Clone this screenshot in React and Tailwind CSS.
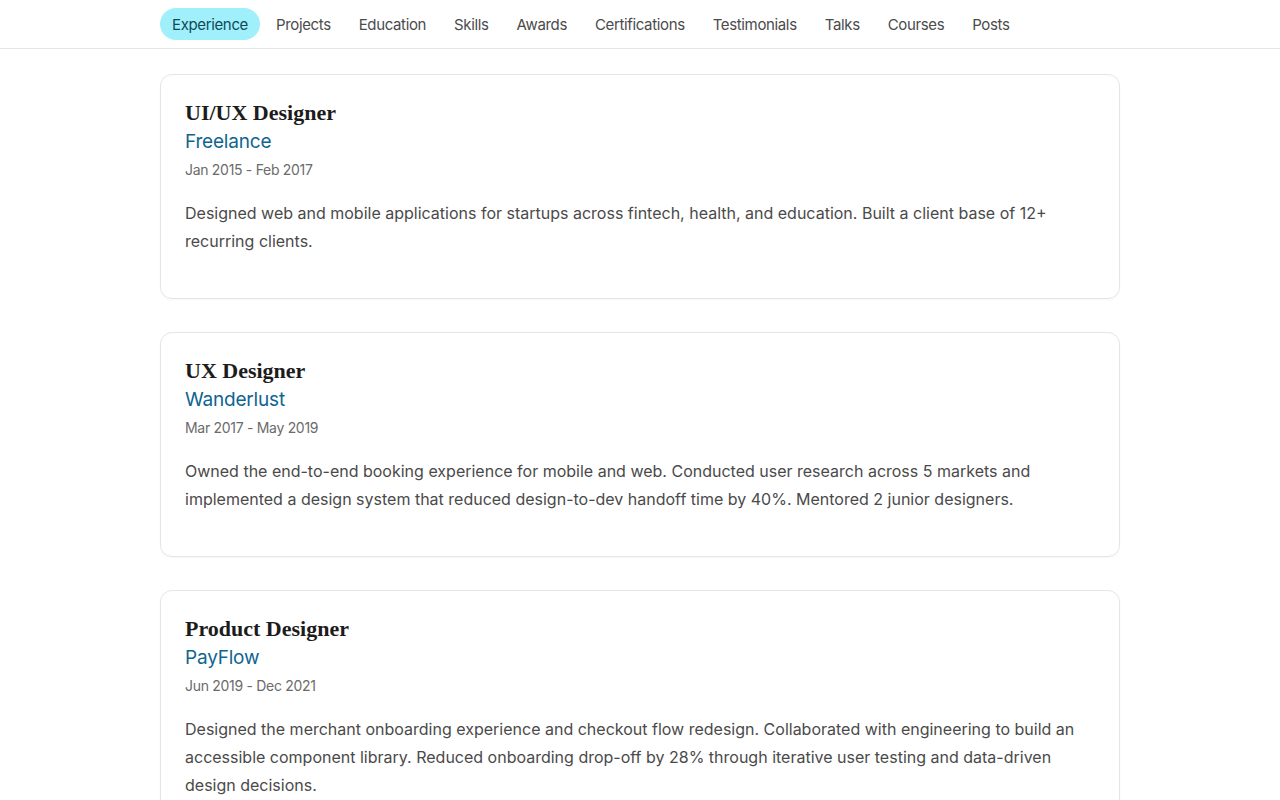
const tabs = ['Experience', 'Projects', 'Education', 'Skills', 'Awards', 'Certifications', 'Testimonials', 'Talks', 'Courses', 'Posts'];

const jobs = [
  {
    title: 'UI/UX Designer',
    company: 'Freelance',
    dates: 'Jan 2015 - Feb 2017',
    text: 'Designed web and mobile applications for startups across fintech, health, and education. Built a client base of 12+ recurring clients.',
  },
  {
    title: 'UX Designer',
    company: 'Wanderlust',
    dates: 'Mar 2017 - May 2019',
    text: 'Owned the end-to-end booking experience for mobile and web. Conducted user research across 5 markets and implemented a design system that reduced design-to-dev handoff time by 40%. Mentored 2 junior designers.',
  },
  {
    title: 'Product Designer',
    company: 'PayFlow',
    dates: 'Jun 2019 - Dec 2021',
    text: 'Designed the merchant onboarding experience and checkout flow redesign. Collaborated with engineering to build an accessible component library. Reduced onboarding drop-off by 28% through iterative user testing and data-driven design decisions.',
  },
];

export default function App() {
  return (
    <div className="min-h-screen bg-white font-['Inter',sans-serif]">
      <nav className="h-[49px] border-b border-[#e6e6e6] bg-white">
        <div className="max-w-[960px] mx-auto h-12 flex items-center gap-1">
          {tabs.map((t, i) => (
            <button
              key={t}
              className={
                i === 0
                  ? 'h-8 px-3 pt-[2px] rounded-full bg-[#a0f0fb] text-[#0e4a5c] text-[15px] tracking-[-0.36px]'
                  : 'h-8 px-3 pt-[2px] rounded-full text-[#4b4b4b] text-[15px] tracking-[-0.36px]'
              }
            >
              {t}
            </button>
          ))}
        </div>
      </nav>

      <main className="max-w-[960px] mx-auto mt-[25px] flex flex-col gap-[33px] pb-8">
        {jobs.map((j) => (
          <div key={j.title} className="border border-[#e5e5e5] rounded-xl px-6 pt-6 pb-[43px] shadow-[0_1px_2px_rgba(0,0,0,0.04)]">
            <h2 className="text-[22px] leading-7 font-bold text-[#1c1c1c] font-['Liberation_Serif',serif]">
              {j.title}
            </h2>
            <div className="text-[19px] leading-7 pt-px text-[#0f6590] tracking-[-0.2px]">{j.company}</div>
            <div className="text-[14px] leading-7 -mb-px text-[#6b6b6b] tracking-[-0.3px]">{j.dates}</div>
            <p className="mt-4 text-[16px] leading-7 text-[#4a4a4a]">{j.text}</p>
          </div>
        ))}
      </main>
    </div>
  );
}
